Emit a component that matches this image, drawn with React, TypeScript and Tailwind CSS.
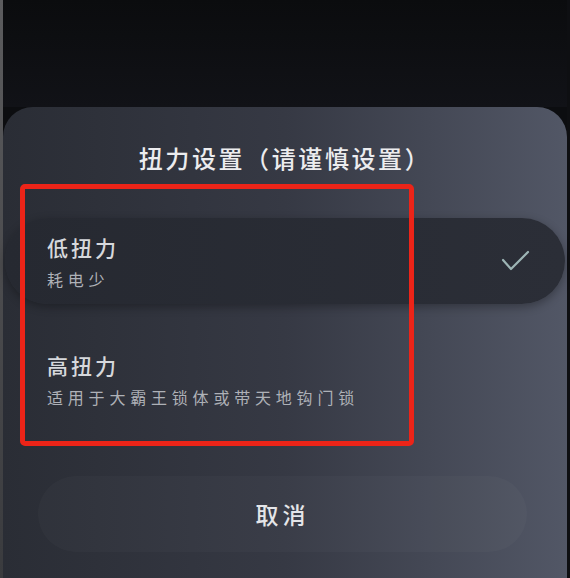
import React from 'react';

const cjk = { fontFamily: '"Noto Sans CJK SC", "Noto Sans", sans-serif' };

const Check = () => (
  <svg width="30" height="24" viewBox="0 0 30 24" fill="none">
    <path d="M2 11 L10 20 L27 3" stroke="#9db5b5" strokeWidth="2.2" strokeLinecap="round" strokeLinejoin="round" />
  </svg>
);

const Option = ({ title, sub, selected }: { title: string; sub: string; selected?: boolean }) => (
  <div
    className={`h-[86px] mx-[2px] flex items-center justify-between pl-[42px] pr-[34px] rounded-full ${
      selected ? 'bg-gradient-to-r from-[#262931] to-[#2b2e37] shadow-[0_3px_10px_rgba(0,0,0,0.3)]' : ''
    }`}
  >
    <div className="flex flex-col">
      <span className="text-[21px] leading-[26px] tracking-[3px] font-medium text-[#d6d8dc]">{title}</span>
      <span className="mt-[9px] text-[16px] leading-[20px] tracking-[4.8px] text-[#aeb1b7]">{sub}</span>
    </div>
    {selected && <Check />}
  </div>
);

const App: React.FC = () => (
  <div className="w-[570px] h-[578px] overflow-hidden flex bg-[#0c0d10]" style={cjk}>
    {/* left edge strip */}
    <div className="w-[3px] bg-gradient-to-b from-[#5c5c5e] to-[#3a3b3e]"></div>

    <div className="flex-1 flex flex-col">
      {/* dimmed backdrop */}
      <div className="h-[107px] bg-gradient-to-b from-[#0b0c0e] to-[#111217]"></div>

      {/* bottom sheet */}
      <div className="relative flex-1 rounded-t-[30px] bg-gradient-to-r from-[#2a2d35] via-[#363944] to-[#525766]">
        <h1 className="pt-[39px] text-center text-[24px] leading-[24px] tracking-[2.6px] font-medium text-[#ececee]">
          扭力设置（请谨慎设置）
        </h1>

        <div className="mt-[48px] flex flex-col gap-[32px]">
          <Option title="低扭力" sub="耗电少" selected />
          <Option title="高扭力" sub="适用于大霸王锁体或带天地钩门锁" />
        </div>

        <button className="mt-[54px] ml-[35px] w-[489px] h-[76px] rounded-full bg-white/[0.025] text-[23px] tracking-[4px] font-medium text-[#e4e5e8]">
          取消
        </button>

        {/* annotation box */}
        <div className="absolute left-[17px] top-[77px] w-[394px] h-[262px] border-[5px] border-[#ec2418] rounded-[5px] pointer-events-none"></div>
      </div>
    </div>

    {/* right edge strip */}
    <div className="w-[3px] bg-[#0e0f12]"></div>
  </div>
);

export default App;
